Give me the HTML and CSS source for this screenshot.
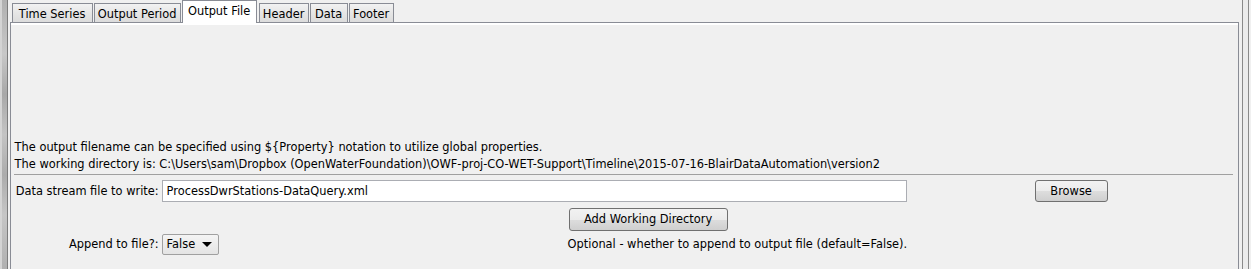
FILE: index.html
```html
<!DOCTYPE html>
<html>
<head>
    <meta charset="UTF-8">
    <title>Output File</title>
    <link rel="stylesheet" href="styles.css">
</head>
<body>
    <div class="frame">
        <div class="left-strip"></div>
        <div class="main">
            <!-- Tabs -->
            <div class="tabs">
                <div class="tab">Time Series</div>
                <div class="tab">Output Period</div>
                <div class="tab active">Output File</div>
                <div class="tab">Header</div>
                <div class="tab">Data</div>
                <div class="tab">Footer</div>
            </div>
            <div class="panel">
                <div class="notes">
                    <div>The output filename can be specified using ${Property} notation to utilize global properties.</div>
                    <div>The working directory is: C:\Users\sam\Dropbox (OpenWaterFoundation)\OWF-proj-CO-WET-Support\Timeline\2015-07-16-BlairDataAutomation\version2</div>
                </div>
                <div class="separator"></div>
                <div class="row row-file">
                    <label class="field-label">Data stream file to write:</label>
                    <input class="text-field" type="text" value="ProcessDwrStations-DataQuery.xml">
                    <button class="button browse">Browse</button>
                </div>
                <div class="row row-add">
                    <button class="button add-dir">Add Working Directory</button>
                </div>
                <div class="row row-append">
                    <label class="field-label">Append to file?:</label>
                    <div class="combo">
                        <span>False</span>
                        <span class="arrow"></span>
                    </div>
                    <span class="hint">Optional - whether to append to output file (default=False).</span>
                </div>
            </div>
        </div>
        <div class="right-strip"></div>
    </div>
</body>
</html>
```

FILE: styles.css
```css
body {
    margin: 0;
    padding: 0;
    background-color: #f0f0f0;
    color: #000;
    font-family: "DejaVu Sans", Verdana, sans-serif;
    font-size: 11.4px;
    height: 269px;
    overflow: hidden;
}
.frame {
    display: flex;
    height: 269px;
}
.left-strip {
    width: 6px;
    border-left: 2px solid #d4d4d4;
    border-right: 1px solid #7c7c7c;
    background: linear-gradient(180deg, #b0b0b0 0%, #c8c8c8 20%, #a8a8a8 35%, #c4c4c4 50%, #acacac 65%, #c6c6c6 80%, #b0b0b0 100%);
}
.main {
    flex: 1;
    padding-left: 2px;
    display: flex;
    flex-direction: column;
}
.right-strip {
    width: 7px;
    margin-left: 3px;
    border-left: 1px solid #8a8a8a;
    border-right: 1px solid #8a8a8a;
    background-color: #ececec;
    margin-right: 2px;
}

/* tabs */
.tabs {
    display: flex;
    align-items: flex-end;
    height: 22px;
    padding-left: 2px;
}
.tab {
    height: 18px;
    line-height: 20px;
    margin-right: 1px;
    border: 1px solid #898c95;
    border-bottom: none;
    background: linear-gradient(180deg, #f2f2f2 0%, #e6e6e6 50%, #dcdcdc 100%);
    text-align: center;
    box-sizing: content-box;
    white-space: nowrap;
}
.tab:nth-child(1) { width: 79px; }
.tab:nth-child(2) { width: 85px; }
.tab:nth-child(3) { width: 73px; }
.tab:nth-child(4) { width: 48px; margin-left: 1px; }
.tab:nth-child(5) { width: 36px; }
.tab:nth-child(6) { width: 43px; }
.tab.active {
    height: 22px;
    line-height: 21px;
    background: #fff;
    margin-bottom: -1px;
    position: relative;
    z-index: 1;
}

.panel {
    flex: 1;
    border: 1px solid #898c95;
    border-bottom: none;
    box-shadow: inset 0 2px 0 #fff;
    width: 1223px;
    padding-left: 4px;
}
.notes {
    margin-top: 116px;
    line-height: 17px;
    white-space: nowrap;
}
.separator {
    height: 1px;
    background-color: #a0a0a0;
    margin: 1px 0 0 -1px;
    width: 1219px;
}
.row {
    display: flex;
    align-items: center;
    white-space: nowrap;
}
.row-file {
    margin-top: 5px;
    height: 22px;
}
.row-add {
    margin-top: 5px;
    height: 24px;
}
.row-append {
    margin-top: 2px;
    height: 22px;
}
.field-label {
    width: 144px;
    text-align: right;
    margin-right: 3px;
}
.text-field {
    width: 745px;
    height: 22px;
    box-sizing: border-box;
    border: 1px solid #abadb3;
    background: #fff;
    font: inherit;
    padding: 0 4px;
    margin: 0;
}
.button {
    font: inherit;
    color: #000;
    border: 1px solid #707070;
    border-radius: 3px;
    background: linear-gradient(180deg, #f2f2f2 0%, #ebebeb 50%, #dddddd 51%, #cfcfcf 100%);
    box-sizing: border-box;
    padding: 0;
    margin: 0;
}
.browse {
    width: 73px;
    height: 22px;
    margin-left: 128px;
}
.add-dir {
    width: 159px;
    height: 23px;
    margin-left: 554px;
}
.combo {
    width: 57px;
    height: 21px;
    box-sizing: border-box;
    border: 1px solid #a0a0a0;
    border-radius: 2px;
    background: linear-gradient(180deg, #f4f4f4 0%, #e4e4e4 100%);
    display: flex;
    align-items: center;
    justify-content: space-between;
    padding: 0 6px 0 4px;
}
.arrow {
    width: 0;
    height: 0;
    border-left: 5px solid transparent;
    border-right: 5px solid transparent;
    border-top: 5px solid #000;
}
.hint {
    margin-left: 349px;
}
```
